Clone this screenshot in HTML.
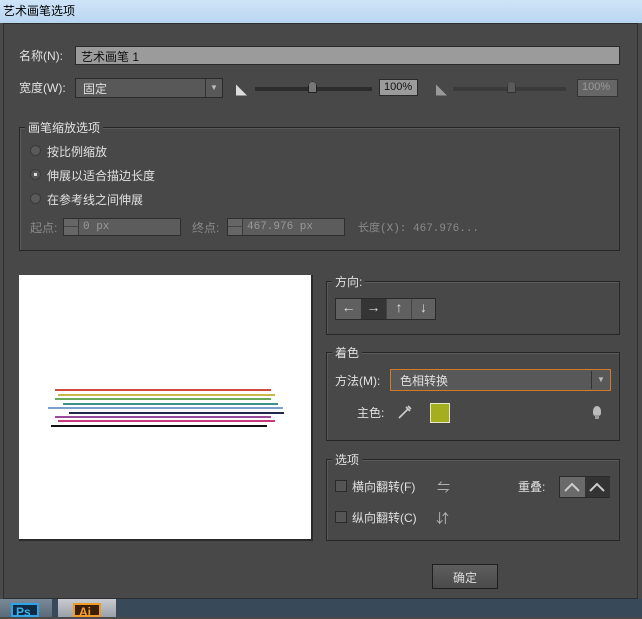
<!DOCTYPE html><html><head><meta charset="utf-8"><style>
*{margin:0;padding:0;box-sizing:border-box}
body{width:642px;height:617px;overflow:hidden;background:#4a4a4a;font-family:"Liberation Sans","Noto Sans CJK SC",sans-serif;font-size:12px;color:#e0e0e0;position:relative}
.a{position:absolute}
.title{left:0;top:0;width:642px;height:23px;background:linear-gradient(#cfe4f7,#b9d6f1);color:#000;font-size:12px;padding:2px 0 0 3px}
.win{left:3px;top:23px;width:635px;height:576px;background:#484848;border:1px solid #2e2e2e}
.field{background:#9b9b9b;border:1px solid #2a2a2a;color:#111}
.grp{border:1px solid #262626;box-shadow:1px 1px 0 #5a5a5a inset}
.lg{background:#484848;padding:0 3px;font-size:12px}
.dim{color:#8a8a8a}
.radio{width:11px;height:11px;border-radius:50%;background:#5a5a5a;border:1px solid #3a3a3a}
.cb{width:12px;height:12px;background:#555;border:1px solid #2a2a2a}
.spin{background:#5c5c5c;border:1px solid #2e2e2e;color:#999;font-family:"Liberation Mono","Noto Sans CJK SC",monospace;font-size:11px}
.sa{position:absolute;left:0;top:0;width:15px;height:16px;border-right:1px solid #3a3a3a;background:#666}
.sa:after{content:"";position:absolute;left:0;top:7px;width:15px;height:1px;background:#444}
.ln{position:absolute;height:2px}
</style></head><body>
<div class="a title">艺术画笔选项</div>
<div class="a win"></div>
<div class="a" style="left:19px;top:47px">名称(N):</div>
<div class="a field" style="left:75px;top:46px;width:545px;height:19px;padding:1px 0 0 5px">艺术画笔 1</div>
<div class="a" style="left:19px;top:79px">宽度(W):</div>
<div class="a" style="left:75px;top:78px;width:148px;height:20px;background:#585858;border:1px solid #2a2a2a;padding:1px 0 0 7px">固定</div>
<div class="a" style="left:205px;top:79px;width:17px;height:18px;border-left:1px solid #333;color:#bbb;font-size:8px;padding:4px 0 0 4px">▼</div>
<div class="a" style="left:236px;top:82px;color:#ddd;font-size:11px">◣</div>
<div class="a" style="left:255px;top:87px;width:117px;height:4px;background:#2c2c2c"></div>
<div class="a" style="left:308px;top:81px;width:9px;height:12px;background:#777;border:1px solid #222;clip-path:polygon(50% 0,100% 35%,100% 100%,0 100%,0 35%)"></div>
<div class="a field" style="left:379px;top:79px;width:39px;height:17px;font-size:11px;padding:1px 0 0 4px">100%</div>
<div class="a" style="left:436px;top:82px;color:#999;font-size:11px">◣</div>
<div class="a" style="left:453px;top:87px;width:113px;height:4px;background:#3a3a3a"></div>
<div class="a" style="left:507px;top:81px;width:9px;height:12px;background:#5a5a5a;border:1px solid #333;clip-path:polygon(50% 0,100% 35%,100% 100%,0 100%,0 35%)"></div>
<div class="a" style="left:577px;top:79px;width:41px;height:18px;background:#666;border:1px solid #333;color:#999;font-size:11px;padding:1px 0 0 4px">100%</div>

<div class="a grp" style="left:19px;top:127px;width:601px;height:124px"></div>
<div class="a lg" style="left:25px;top:119px">画笔缩放选项</div>
<div class="a radio" style="left:30px;top:145px"></div><div class="a" style="left:47px;top:143px">按比例缩放</div>
<div class="a radio" style="left:30px;top:169px;background:#555"><div style="width:3px;height:3px;background:#ddd;margin:3px"></div></div><div class="a" style="left:47px;top:167px">伸展以适合描边长度</div>
<div class="a radio" style="left:30px;top:193px"></div><div class="a" style="left:47px;top:191px">在参考线之间伸展</div>
<div class="a dim" style="left:30px;top:219px">起点:</div>
<div class="a spin" style="left:63px;top:218px;width:118px;height:18px;padding:2px 0 0 19px"><span class="sa"></span>0 px</div>
<div class="a dim" style="left:192px;top:219px">终点:</div>
<div class="a spin" style="left:227px;top:218px;width:118px;height:18px;padding:2px 0 0 19px"><span class="sa"></span>467.976 px</div>
<div class="a dim" style="left:358px;top:219px;font-family:'Liberation Mono','Noto Sans CJK SC',monospace;font-size:11px">长度(X): 467.976...</div>

<div class="a" style="left:19px;top:275px;width:294px;height:266px;background:#fff;border:2px solid #2a2a2a;border-top:none;border-left:none"></div>
<div class="ln" style="left:55px;top:389px;width:216px;background:#d24a3e"></div>
<div class="ln" style="left:58px;top:394px;width:217px;background:#c9b94a"></div>
<div class="ln" style="left:55px;top:398px;width:216px;background:#6aab5a"></div>
<div class="ln" style="left:63px;top:403px;width:215px;background:#3f8f8a"></div>
<div class="ln" style="left:48px;top:407px;width:235px;background:#7aa0c8"></div>
<div class="ln" style="left:69px;top:412px;width:215px;background:#23284a"></div>
<div class="ln" style="left:55px;top:416px;width:216px;background:#9a4a9a"></div>
<div class="ln" style="left:58px;top:420px;width:217px;background:#c8387a"></div>
<div class="ln" style="left:51px;top:425px;width:216px;background:#111"></div>

<div class="a grp" style="left:326px;top:281px;width:294px;height:54px"></div>
<div class="a lg" style="left:332px;top:273px">方向:</div>
<div class="a" style="left:335px;top:298px;width:101px;height:22px;border:1px solid #2a2a2a;display:flex;color:#ddd;font-size:14px">
<div style="width:25px;background:#606060;text-align:center">←</div><div style="width:25px;background:#353535;text-align:center">→</div><div style="width:25px;background:#606060;text-align:center;border-left:1px solid #444">↑</div><div style="width:24px;background:#606060;text-align:center;border-left:1px solid #444">↓</div></div>

<div class="a grp" style="left:326px;top:352px;width:294px;height:89px"></div>
<div class="a lg" style="left:332px;top:344px">着色</div>
<div class="a" style="left:335px;top:372px">方法(M):</div>
<div class="a" style="left:390px;top:369px;width:221px;height:22px;background:#585858;border:1px solid #d07a2a;padding:2px 0 0 9px">色相转换</div>
<div class="a" style="left:591px;top:371px;width:19px;height:18px;border-left:1px solid #333;color:#bbb;font-size:8px;padding:4px 0 0 5px">▼</div>
<div class="a" style="left:357px;top:404px">主色:</div>
<svg class="a" style="left:397px;top:404px" width="16" height="16"><path d="M2 14 L11 5 M9 3 L13 7 M11 2 L14 5" stroke="#ccc" stroke-width="1.6" fill="none"/></svg>
<div class="a" style="left:430px;top:403px;width:20px;height:20px;background:#a5ae1e;border:1px solid #e8e8c8"></div>
<div class="a" style="left:593px;top:406px;width:8px;height:10px;border-radius:50% 50% 30% 30%;background:#bbb"></div>
<div class="a" style="left:595px;top:415px;width:4px;height:4px;background:#999"></div>

<div class="a grp" style="left:326px;top:459px;width:294px;height:82px"></div>
<div class="a lg" style="left:332px;top:451px">选项</div>
<div class="a cb" style="left:335px;top:480px"></div><div class="a" style="left:352px;top:478px">横向翻转(F)</div>
<div class="a" style="left:437px;top:477px;color:#bbb;font-size:13px">⇋</div>
<div class="a cb" style="left:335px;top:511px"></div><div class="a" style="left:352px;top:509px">纵向翻转(C)</div>
<div class="a" style="left:436px;top:508px;color:#bbb;font-size:13px">⇵</div>
<div class="a" style="left:518px;top:478px">重叠:</div>
<div class="a" style="left:559px;top:476px;width:51px;height:22px;border:1px solid #2a2a2a;display:flex">
<div style="width:25px;background:#6a6a6a"><svg width="25" height="20"><path d="M5 14 L12 7 L19 14" stroke="#ccc" stroke-width="2" fill="none"/></svg></div>
<div style="width:25px;background:#333"><svg width="25" height="20"><path d="M5 14 L12 7 L19 14" stroke="#ccc" stroke-width="2" fill="none"/></svg></div></div>

<div class="a" style="left:432px;top:564px;width:66px;height:25px;background:linear-gradient(#5e5e5e,#4a4a4a);border:1px solid #1e1e1e;text-align:center;padding-top:4px;color:#ddd">确定</div>
<div class="a" style="left:0;top:599px;width:642px;height:18px;background:#384a5a"></div>
<div class="a" style="left:0;top:599px;width:52px;height:18px;background:linear-gradient(#7a8a98,#5a6a78)"></div>
<div class="a" style="left:11px;top:603px;width:28px;height:14px;background:#0e2a44;border:2px solid #2fa3e6;color:#3fb0ee;font-weight:bold;font-size:12px;padding-left:3px">Ps</div>
<div class="a" style="left:58px;top:599px;width:58px;height:18px;background:linear-gradient(#c8ccd0,#9aa0a8)"></div>
<div class="a" style="left:73px;top:603px;width:28px;height:14px;background:#3a1e06;border:2px solid #f09a2a;color:#f5a030;font-weight:bold;font-size:12px;padding-left:4px">Ai</div>
</body></html>
